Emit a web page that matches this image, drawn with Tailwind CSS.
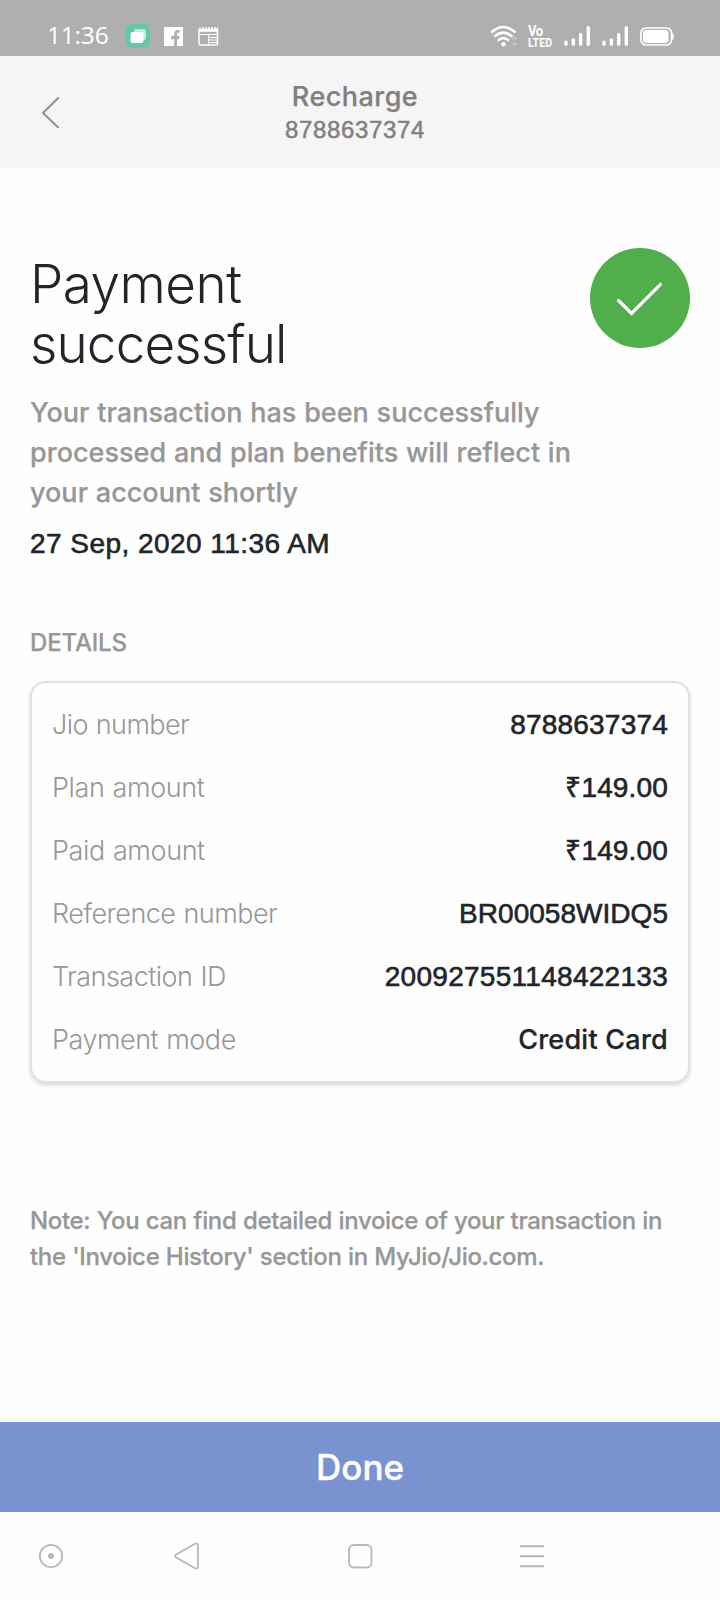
<!DOCTYPE html>
<html lang="en">
<head>
<meta charset="utf-8">
<title>Recharge</title>
<script src="https://cdn.jsdelivr.net/npm/@tailwindcss/browser@4"></script>
</head>
<body class="bg-white">
<div class="flex h-[1600px] w-[720px] flex-col overflow-hidden bg-[#fefefe] font-['Inter','Liberation_Sans',sans-serif] font-medium text-[#979797]">

  <!-- Status bar -->
  <div class="flex h-14 shrink-0 items-start bg-[#afafaf] pt-[23px] pl-[47px] text-white">
    <div class="-mt-px w-[79px] font-['Open_Sans',sans-serif] text-[24.500px] leading-[26px] font-normal whitespace-nowrap tracking-[-0.200px]">11:36</div>
    <svg class="mt-px size-6" viewBox="0 0 24 24"><rect width="24" height="24" rx="6" fill="#66c7a6"/><rect x="8" y="5" width="12" height="11" rx="2.500" fill="#c4eadc"/><rect x="4.500" y="8" width="13" height="11" rx="2" fill="#fff"/></svg>
    <svg class="mt-1 ml-3.5 h-[19px] w-[19px]" viewBox="0 0 19 19"><rect width="19" height="19" fill="#fff"/><path d="M10.200 19v-6.800H7V9h3.200V7c0-2.800 1.400-4 3.600-4h1.700v2.800h-1.200c-1 0-1.300.4-1.300 1.300V9h2.400v3.200H13V19z" fill="#afafaf"/></svg>
    <svg class="mt-[3px] ml-[15px] h-[20px] w-[21px]" viewBox="0 0 21 20" fill="none" stroke="#fff"><path d="M1 4v13.700q0 1.300 1.300 1.300h15.900q1.300 0 1.300-1.300V4" stroke-width="1.500"/><path d="M.6 4.300h19.500" stroke-width="3"/><path d="M2 3V1.500M5 3V1M8 3V1M11 3V1M14 3V1M17 3V1M19.500 3V1.500" stroke-width="1.600"/><path d="M1 8.500h18.500M10.500 8.500v10M11 11.500h8M11 14h8M11 16.500h8" stroke-width="1.200"/></svg>
    <svg class="mt-0.5 ml-[271px] h-[22px] w-[28px]" viewBox="0 0 28 22" fill="none" stroke="#fff" stroke-width="2.500"><path d="M1.300 7.500Q13.300-3.500 25.500 7.500M4.300 11.700Q13.300 3.500 22.300 11.700M7.700 15.600Q13.300 10.700 19 15.600"/><circle cx="13.500" cy="19.200" r="2.200" fill="#fff" stroke="none"/><path d="M22.500 14.500l2-2.300 2 2.300M22.500 17.700l2 2.300 2-2.300" stroke="#cacaca" stroke-width="1.500"/></svg>
    <div class="mt-[3px] ml-[10px] flex w-[26px] flex-col font-['Roboto',sans-serif] text-[13px] leading-[11px] font-bold">
      <span class="h-[11px] origin-bottom-left scale-y-110 tracking-[-0.500px]">Vo</span>
      <span class="h-[11px] origin-left scale-x-[0.820] whitespace-nowrap">LTED</span>
    </div>
    <svg class="mt-[3px] ml-[10px] h-5 w-[27px]" viewBox="0 0 27 20" stroke="#fff" stroke-width="3.400" stroke-linecap="round"><path d="M2 16.300v2M9.300 14v4.300M16.700 8.500v9.800M24.300 1.700v16.600"/></svg>
    <svg class="mt-[3px] ml-[11px] h-5 w-[27px]" viewBox="0 0 27 20" stroke="#fff" stroke-width="3.400" stroke-linecap="round"><path d="M2 16.300v2M9.300 14v4.300M16.700 8.500v9.800M24.300 1.700v16.600"/></svg>
    <svg class="mt-[3.500px] ml-[11px] h-[19px] w-[34px]" viewBox="0 0 34 19"><rect x="1" y="1" width="30.500" height="17" rx="5" fill="none" stroke="#fff" stroke-width="1.700"/><rect x="3" y="3" width="25.500" height="13" rx="3" fill="#fff"/><path d="M31.500 5.500q2.500 1 2.500 4t-2.500 4z" fill="#fff"/></svg>
  </div>

  <!-- Title bar -->
  <div class="flex h-28 shrink-0 bg-[#f5f5f5] text-[#808080]">
    <div class="flex w-[100px] items-center pl-[41px]">
      <svg class="h-8 w-[19px]" viewBox="0 0 19 32" fill="none" stroke="#8e8e8e" stroke-width="1.900"><path d="M17.700 1.500L2 17l15.700 15"/></svg>
    </div>
    <div class="flex w-[510px] flex-col items-center pt-[22px]">
      <div class="text-[27px] leading-[38px] tracking-[0.450px] [-webkit-text-stroke:0.250px]">Recharge</div>
      <div class="-mt-px font-['Liberation_Sans',sans-serif] text-[24px] leading-[29px] font-normal tracking-[0.650px] [-webkit-text-stroke:0.500px]">8788637374</div>
    </div>
  </div>

  <!-- Content -->
  <div class="flex grow flex-col px-[30px]">
    <div class="mt-20 flex items-start justify-between">
      <h1 class="pt-[6px] text-[53px] leading-[60px] font-light text-[#212529]"><span class="tracking-[-0.500px]">Payment</span><br><span class="tracking-[-0.850px]">successful</span></h1>
      <svg class="size-[100px]" viewBox="0 0 100 100"><circle cx="50" cy="50" r="50" fill="#50af4a"/><path d="M28.500 52.500L41.500 65.500L70.500 36.300" fill="none" stroke="#fff" stroke-width="3.200" stroke-linecap="round"/></svg>
    </div>
    <p class="mt-[19px] text-[27px] leading-10 tracking-[0.020px] [word-spacing:0.500px] whitespace-nowrap [-webkit-text-stroke:0.250px]">Your transaction has been successfully<br>processed and plan benefits will reflect in<br>your account shortly</p>
    <div class="mt-[11px] font-['Liberation_Sans',sans-serif] text-[28px] leading-10 font-normal tracking-[0.450px] text-[#212529] [-webkit-text-stroke:0.600px]">27 Sep, 2020 11:36 AM</div>
    <h2 class="mt-[61px] text-[24px] leading-9 tracking-[-0.170px] [-webkit-text-stroke:0.250px]">DETAILS</h2>

    <div class="mt-[20px] flex flex-col rounded-2xl border-2 border-[#dee2e6] px-5 py-2.5 text-[27px] leading-[63px] font-light shadow-[0_2px_4px_rgba(0,0,0,0.180)]">
      <div class="flex justify-between"><span class="tracking-[-0.600px] [word-spacing:1px]">Jio number</span><span class="font-['Liberation_Sans',sans-serif] text-[28px] font-normal tracking-[0.210px] text-[#212529] [-webkit-text-stroke:0.600px]">8788637374</span></div>
      <div class="flex justify-between"><span class="tracking-[-0.400px] [word-spacing:1px]">Plan amount</span><span class="font-['Liberation_Sans',sans-serif] text-[28px] font-normal tracking-[0.160px] text-[#212529] [-webkit-text-stroke:0.600px]">₹149.00</span></div>
      <div class="flex justify-between"><span class="tracking-[-0.400px] [word-spacing:1px]">Paid amount</span><span class="font-['Liberation_Sans',sans-serif] text-[28px] font-normal tracking-[0.160px] text-[#212529] [-webkit-text-stroke:0.600px]">₹149.00</span></div>
      <div class="flex justify-between"><span class="tracking-[-0.540px] [word-spacing:1px]">Reference number</span><span class="font-['Liberation_Sans',sans-serif] text-[28px] font-normal tracking-[0.030px] text-[#212529] [-webkit-text-stroke:0.600px]">BR00058WIDQ5</span></div>
      <div class="flex justify-between"><span class="tracking-[-0.530px] [word-spacing:1px]">Transaction ID</span><span class="font-['Liberation_Sans',sans-serif] text-[28px] font-normal tracking-[0.280px] text-[#212529] [-webkit-text-stroke:0.600px]">200927551148422133</span></div>
      <div class="flex justify-between"><span class="tracking-[-0.480px] [word-spacing:1px]">Payment mode</span><span class="font-medium tracking-[0.240px] text-[#212529] [-webkit-text-stroke:0.250px]">Credit Card</span></div>
    </div>

    <p class="mt-[120px] text-[24px] leading-9 tracking-[-0.340px] [word-spacing:0.400px] whitespace-nowrap [-webkit-text-stroke:0.250px]">Note: You can find detailed invoice of your transaction in<br>the 'Invoice History' section in MyJio/Jio.com.</p>
  </div>

  <!-- Primary action -->
  <button class="h-[90px] shrink-0 bg-[#7893cf] text-center text-[35px] leading-[90px] text-white [-webkit-text-stroke:0.400px]">Done</button>

  <!-- System navigation -->
  <div class="flex h-[88px] shrink-0 items-center bg-[#fefefe] pl-[38px]">
    <svg class="size-[26px]" viewBox="0 0 26 26"><circle cx="13" cy="13" r="11.200" fill="none" stroke="#b7b7b7" stroke-width="1.800"/><circle cx="13" cy="13" r="3" fill="#b7b7b7"/></svg>
    <svg class="ml-[109px] h-7 w-[28px]" viewBox="0 0 28 28" fill="none" stroke="#b7b7b7" stroke-width="1.800" stroke-linejoin="round"><path d="M3.200 12.500L21.500 2q3.500-1.500 3.500 1.500v21q0 3-3.500 1.500L3.200 15.500q-2.400-1.500 0-3z"/></svg>
    <svg class="ml-[146px] size-[26px]" viewBox="0 0 26 26"><rect x="2" y="2" width="22.500" height="22.500" rx="5" fill="none" stroke="#b7b7b7" stroke-width="1.800"/></svg>
    <svg class="ml-[146px] h-6 w-[26px]" viewBox="0 0 26 24" stroke="#b7b7b7" stroke-width="2"><path d="M1 2.300h24M1 12.300h24M1 22.300h24"/></svg>
  </div>
</div>
</body>
</html>
